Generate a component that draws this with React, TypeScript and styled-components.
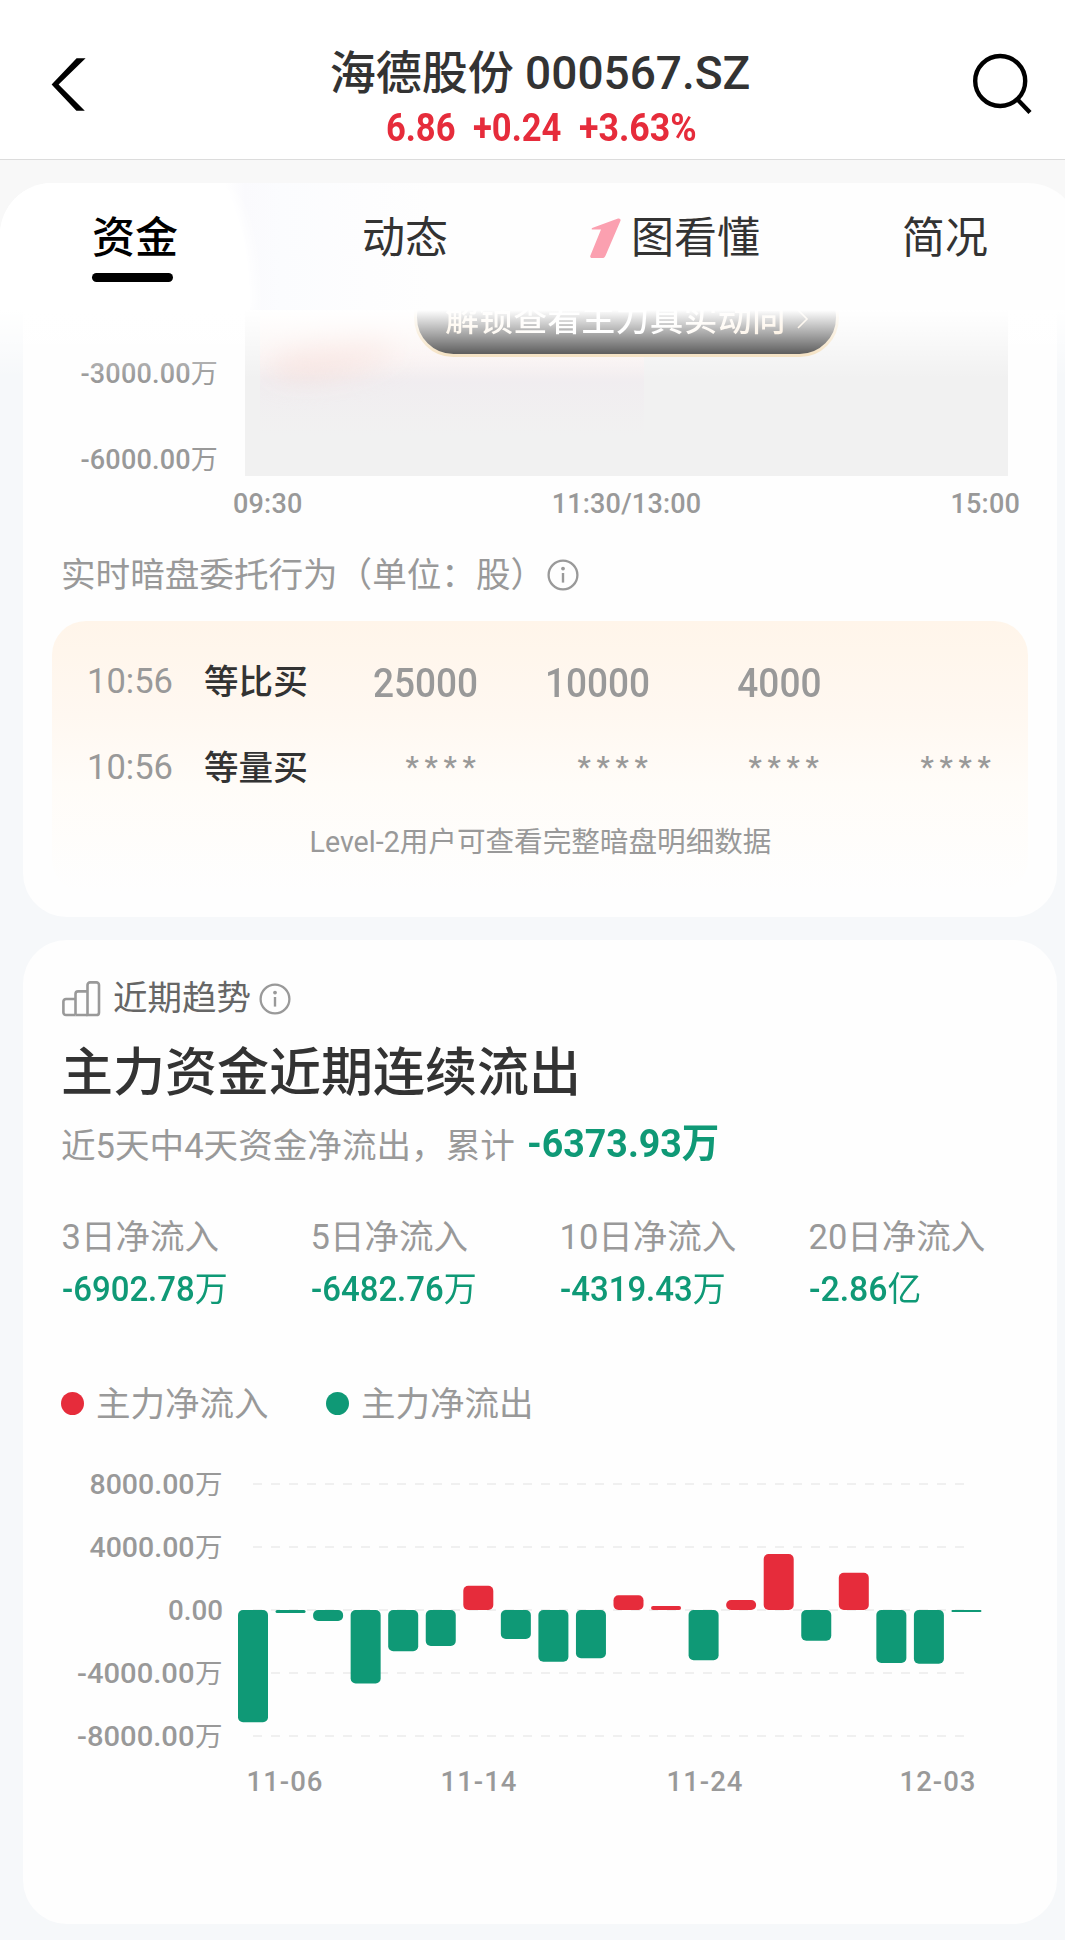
import React from 'react';
import styled, { createGlobalStyle, css } from 'styled-components';

const RED = '#e62c3b';
const GREEN = '#0f9976';
const GREY = '#999999';
const INK = '#333333';

const GlobalStyle = createGlobalStyle`
  html, body { margin: 0; padding: 0; background: #f6f8fa; }
  * { box-sizing: border-box; }
`;

const Page = styled.div`
  width: 1065px;
  height: 1940px;
  overflow: hidden;
  background: #f6f8fa;
  font-family: Roboto, 'Noto Sans CJK SC', sans-serif;
  color: ${INK};
  display: flex;
  flex-direction: column;
`;

/* Text whose glyphs are narrowed or widened horizontally */
const Figure = styled.span<{ $scale?: number; $origin?: string }>`
  display: inline-block;
  white-space: nowrap;
  transform: scaleX(${(p) => p.$scale ?? 1});
  transform-origin: ${(p) => p.$origin ?? 'left'} center;
`;

/* ---------- header ---------- */
const Header = styled.header`
  flex: none;
  height: 160px;
  background: #fff;
  border-bottom: 1px solid #dcdcdc;
  display: grid;
  grid-template-columns: 120px 1fr 120px;
`;

const IconSlot = styled.div<{ $pad: string }>`
  padding: ${(p) => p.$pad};
  svg { display: block; }
`;

const HeaderCenter = styled.div`
  display: flex;
  flex-direction: column;
  align-items: center;
  padding-top: 44px;
`;

const StockName = styled.h1`
  margin: 0 0 0 15px;
  font-size: 46px;
  line-height: 59px;
  font-weight: 500;
  white-space: pre;
`;

const Quote = styled.div`
  width: 310px;
  margin: 5px 0 0 16px;
  display: grid;
  grid-template-columns: 87px 106px 117px;
  color: ${RED};
  font-size: 38px;
  font-weight: 700;
  line-height: 40px;
`;

/* ---------- tabs ---------- */
const TabStrip = styled.nav`
  flex: none;
  height: 150px;
  padding-top: 23px;
  background: #f8f8f8;
`;

const TabList = styled.div`
  width: 1080px;
  height: 127px;
  border-radius: 52px 52px 0 0;
  background:
    linear-gradient(90deg, transparent 225px, #fafafd 245px, #fbfcfe 280px, #fdfdfe 370px, #fefefe 430px);
  background-color: #fff;
  display: grid;
  grid-template-columns: repeat(4, 270px);
  overflow: hidden;
`;

const Tab = styled.div<{ $active?: boolean }>`
  display: flex;
  flex-direction: column;
  align-items: center;
  padding-top: 27px;
  font-size: 43px;
  line-height: 56px;
  color: ${INK};
  ${(p) =>
    p.$active &&
    css`
      color: #000;
      font-weight: 500;
      background: #fff;
      border-radius: 0 40px 0 0 / 0 120px 0 0;
      margin-right: 20px;
      padding-left: 20px;
      box-shadow: 0 0 14px 5px #fff;
    `}
`;

const TabLabel = styled.div`
  display: flex;
  align-items: center;
  gap: 10px;
`;

const Underline = styled.div`
  width: 81px;
  height: 9px;
  margin: 7px 5px 0 0;
  border-radius: 4.5px;
  background: #000;
`;

/* ---------- scrolling content ---------- */
const Content = styled.main`
  position: relative;
  flex: 1;
  padding: 0 8px 0 23px;
  overflow: hidden;
`;

const TopFade = styled.div`
  position: absolute;
  left: 0;
  right: 0;
  top: 0;
  height: 68px;
  background: linear-gradient(180deg, #fff 0%, rgba(255, 255, 255, 0) 100%);
  pointer-events: none;
`;

const Card = styled.section<{ $first?: boolean }>`
  background: #fefefe;
  border-radius: ${(p) => (p.$first ? '0 0 44px 44px' : '44px')};
  height: ${(p) => (p.$first ? 607 : 984)}px;
  margin-bottom: 23px;
`;

const FlowChart = styled.div`
  display: grid;
  grid-template-columns: 222px 763px;
  height: 166px;
`;

const YAxis = styled.div`
  display: flex;
  flex-direction: column;
  align-items: flex-end;
  gap: 56px;
  padding: 49px 27px 0 0;
`;

const AxisText = styled.div`
  font-size: 27px;
  line-height: 30px;
  font-weight: 500;
  letter-spacing: 0.2px;
  color: ${GREY};
  white-space: nowrap;
`;

const Unit = styled.span`
  font-weight: 400;
`;

const Plot = styled.div`
  position: relative;
  overflow: hidden;
  background: #f1f1f1;
`;

const Smear = styled.div`
  position: absolute;
  left: 15px;
  top: 0;
  width: 384px;
  height: 130px;
  overflow: hidden;
  background: linear-gradient(
    180deg,
    rgba(255, 244, 240, 0.9) 0,
    rgba(252, 241, 240, 0.75) 45px,
    rgba(240, 234, 239, 0.55) 72px,
    rgba(241, 241, 241, 0) 125px
  );
  &::before {
    content: '';
    position: absolute;
    left: 8px;
    top: 24px;
    width: 130px;
    height: 40px;
    border-radius: 50%;
    background: rgba(247, 220, 213, 0.7);
    transform: rotate(-10deg);
    filter: blur(14px);
  }
`;

const UnlockPill = styled.div`
  position: absolute;
  left: 169px;
  top: -32px;
  width: 425px;
  height: 79px;
  border: 3px solid #f0d5a8;
  border-radius: 40px;
  background: #060606;
  display: flex;
  align-items: center;
  padding: 2px 0 0 28px;
  font-size: 34.1px;
  font-weight: 500;
  line-height: 44px;
  white-space: nowrap;
`;

const PillText = styled.span`
  background: linear-gradient(90deg, #ffe9c8 0%, #fff 35%, #fff 60%, #fbdcb4 100%);
  -webkit-background-clip: text;
  background-clip: text;
  color: transparent;
  margin-right: 10px;
`;

const TimeAxis = styled.div`
  display: flex;
  justify-content: space-between;
  padding: 13px 37px 0 210px;
  height: 78px;
`;

const SectionLabel = styled.div`
  display: flex;
  align-items: center;
  height: 41px;
  padding-left: 38px;
  font-size: 34.6px;
  line-height: 40px;
  color: ${GREY};
  white-space: nowrap;
  gap: 2px;
`;

const OrderBox = styled.div`
  margin: 26px 29px 0;
  height: 272px;
  border-radius: 34px;
  padding: 18px 35px 0 36px;
  background: linear-gradient(180deg, #fff5ea 0%, #fff8f1 35%, #fffcf8 60%, #fefefe 100%);
`;

const OrderRow = styled.div`
  height: 86px;
  display: grid;
  grid-template-columns: 116px 102px 172px 172px 171px 172px;
  align-items: center;
  line-height: 44px;
  font-size: 34.5px;
`;

const OrderTime = styled.span`
  color: ${GREY};
  margin: -2px 0 0 -1px;
`;

const OrderKind = styled.span`
  font-size: 34.6px;
  font-weight: 500;
  white-space: nowrap;
`;

const OrderQty = styled.span<{ $masked?: boolean }>`
  text-align: right;
  color: ${GREY};
  font-weight: 500;
  font-size: ${(p) => (p.$masked ? 30 : 39.8)}px;
  letter-spacing: ${(p) => (p.$masked ? 5.7 : 0)}px;
  padding-top: ${(p) => (p.$masked ? 0 : 3)}px;
  margin: ${(p) => (p.$masked ? '-3px -3.5px 0 0' : '0 -0.5px 0 0')};
`;

const OrderNote = styled.div`
  margin-top: 11px;
  text-align: center;
  font-size: 28.6px;
  line-height: 40px;
  color: ${GREY};
`;

/* ---------- trend card ---------- */
const TrendHead = styled.div`
  display: flex;
  align-items: center;
  padding: 38px 0 0 39px;
  font-size: 34.5px;
  line-height: 41px;
  color: #666;
  svg { flex: none; }
`;

const TrendName = styled.span`
  margin: 0 8px 0 12px;
`;

const TrendTitle = styled.h2`
  margin: 25px 0 0 38px;
  font-size: 52px;
  line-height: 60px;
  font-weight: 500;
`;

const TrendSummary = styled.div`
  display: flex;
  align-items: baseline;
  margin: 19px 0 0 38px;
  height: 44px;
  font-size: 34.6px;
  line-height: 44px;
  color: ${GREY};
  white-space: nowrap;
`;

const SummaryValue = styled.span`
  margin: 0 0 0 12px;
  position: relative;
  top: -1px;
  color: ${GREEN};
  font-size: 39.5px;
  font-weight: 700;
`;

const Stats = styled.div`
  display: grid;
  grid-template-columns: repeat(4, 249px);
  margin: 50px 0 0 38.5px;
`;

const Stat = styled.div`
  display: flex;
  flex-direction: column;
  gap: 12px;
  font-size: 34.5px;
  line-height: 40px;
  color: ${GREY};
`;

const StatValue = styled.div`
  color: ${GREEN};
  font-weight: 500;
  white-space: nowrap;
`;

const Legend = styled.div`
  display: flex;
  gap: 57.5px;
  margin: 75px 0 0 38px;
  font-size: 34.5px;
  line-height: 40px;
  color: ${GREY};
`;

const LegendItem = styled.div<{ $color: string }>`
  display: flex;
  align-items: center;
  gap: 12px;
  &::before {
    content: '';
    width: 23px;
    height: 23px;
    margin-top: -1px;
    border-radius: 50%;
    background: ${(p) => p.$color};
  }
`;

const ChartSvg = styled.svg`
  display: block;
  margin-top: 36px;
  text {
    font-family: Roboto, 'Noto Sans CJK SC', sans-serif;
    font-size: 27.5px;
    font-weight: 500;
    fill: ${GREY};
  }
  .unit { font-weight: 400; }
`;

const InfoIcon = () => (
  <svg width="32" height="32" viewBox="0 0 32 32" fill="none">
    <circle cx="16" cy="16" r="14.4" stroke={GREY} strokeWidth="2.3" />
    <circle cx="16" cy="9.6" r="1.9" fill={GREY} />
    <path d="M16 14v9.6" stroke={GREY} strokeWidth="2.4" />
  </svg>
);

const BarsIcon = () => (
  <svg width="39" height="36" viewBox="0 0 39 36" fill="none" stroke={GREY} strokeWidth="2.6">
    <path d="M13.5 34H4a2.6 2.6 0 0 1-2.6-2.6V20.6A2.6 2.6 0 0 1 4 18h9.5" />
    <path d="M13.5 34V13a2.6 2.6 0 0 1 2.6-2.6h9.4M13.5 34h12" />
    <path d="M25.5 34V4a2.6 2.6 0 0 1 2.6-2.6h6.3A2.6 2.6 0 0 1 37 4v27.4a2.6 2.6 0 0 1-2.6 2.6z" />
  </svg>
);

/* Bar extents in chart pixels, positive is inflow */
const bars = [
  -112.3, -3, -11, -73.5, -41.3, -36, 24.3, -29, -51.7, -48.3, 14.7, 4, -50.3, 10, 56, -30.7, 37.3, -53, -53.7, -2,
];
const levels = [
  { y: 24, label: '8000.00', unit: '万', width: 105 },
  { y: 87, label: '4000.00', unit: '万', width: 105 },
  { y: 150, label: '0.00', unit: '', width: 55 },
  { y: 213, label: '-4000.00', unit: '万', width: 117.5 },
  { y: 276, label: '-8000.00', unit: '万', width: 117.5 },
];
const days = [
  { x: 261.5, label: '11-06' },
  { x: 455.5, label: '11-14' },
  { x: 681.5, label: '11-24' },
  { x: 914.5, label: '12-03' },
];

const TrendChart = () => (
  <ChartSvg width="1034" height="350" viewBox="0 0 1034 350">
    {levels.map((l) => (
      <g key={l.label}>
        <line x1="230" x2="942" y1={l.y} y2={l.y} stroke="#f0f0f0" strokeWidth="2" strokeDasharray="9 9" />
        <text
          x={l.unit ? 171.5 : 200}
          y={l.y + 9.7}
          textAnchor="end"
          textLength={l.width}
          lengthAdjust="spacingAndGlyphs"
        >
          {l.label}
        </text>
        {l.unit && (
          <text className="unit" x="199.5" y={l.y + 9.7} textAnchor="end">
            {l.unit}
          </text>
        )}
      </g>
    ))}
    {bars.map((h, i) => {
      const size = Math.abs(h);
      return (
        <rect
          key={i}
          x={215 + i * 37.55}
          y={h > 0 ? 150 - size : 150}
          width="30"
          height={size}
          rx={Math.min(5, size / 2)}
          fill={h > 0 ? RED : GREEN}
        />
      );
    })}
    {days.map((d) => (
      <text key={d.label} x={d.x} y="331" textAnchor="middle" textLength="76">
        {d.label}
      </text>
    ))}
  </ChartSvg>
);

const orders = [
  { time: '10:56', kind: '等比买', qty: ['25000', '10000', '4000', ''] },
  { time: '10:56', kind: '等量买', qty: ['****', '****', '****', '****'] },
];

const stats = [
  { label: '3日净流入', value: '-6902.78', unit: '万', scale: 0.955 },
  { label: '5日净流入', value: '-6482.76', unit: '万', scale: 0.955 },
  { label: '10日净流入', value: '-4319.43', unit: '万', scale: 0.955 },
  { label: '20日净流入', value: '-2.86', unit: '亿', scale: 0.98 },
];

export default function App() {
  return (
    <Page>
      <GlobalStyle />
      <Header>
        <IconSlot $pad="58px 0 0 51px">
          <svg width="35" height="53" viewBox="0 0 35 53">
            <path d="M25.6 0.3H34.6L7.6 26.4 33.8 52.7H25.4L0.6 26.4z" fill="#000" />
          </svg>
        </IconSlot>
        <HeaderCenter>
          <StockName>海德股份 000567.SZ</StockName>
          <Quote>
            <Figure $scale={0.91}>6.86</Figure>
            <Figure $scale={0.91}>+0.24</Figure>
            <Figure $scale={0.94}>+3.63%</Figure>
          </Quote>
        </HeaderCenter>
        <IconSlot $pad="53px 0 0 26.5px">
          <svg width="60" height="62" viewBox="0 0 60 62" fill="none" stroke="#000" strokeWidth="4.4">
            <circle cx="28.2" cy="28" r="25" />
            <path d="M45.5 46.5L58 59.5" />
          </svg>
        </IconSlot>
      </Header>

      <TabStrip>
        <TabList>
          <Tab $active>
            <TabLabel>资金</TabLabel>
            <Underline />
          </Tab>
          <Tab>动态</Tab>
          <Tab>
            <TabLabel>
              <svg width="31" height="40" viewBox="0 0 31 40">
                <path
                  d="M28 0.6C29.8 0 31 1.4 30.4 3L15.6 37.4C15 39 13.8 40 12 40H2C0.6 40 -0.2 39 0.4 37.6L11 11.6H3C1.2 11.6 1.2 10.4 2.8 9.8z"
                  fill="#fba0b0"
                />
              </svg>
              图看懂
            </TabLabel>
          </Tab>
          <Tab>简况</Tab>
        </TabList>
      </TabStrip>

      <Content>
        <Card $first>
          <FlowChart>
            <YAxis>
              <AxisText>
                -3000.00<Unit>万</Unit>
              </AxisText>
              <AxisText>
                -6000.00<Unit>万</Unit>
              </AxisText>
            </YAxis>
            <Plot>
              <Smear />
              <UnlockPill>
                <PillText>解锁查看主力真实动向</PillText>
                <svg width="14" height="20" viewBox="0 0 14 20" fill="none">
                  <path d="M2 1l9 9-9 9" stroke="#fbdcb4" strokeWidth="1.6" />
                </svg>
              </UnlockPill>
            </Plot>
          </FlowChart>
          <TimeAxis>
            <AxisText>09:30</AxisText>
            <AxisText>11:30/13:00</AxisText>
            <AxisText>15:00</AxisText>
          </TimeAxis>
          <SectionLabel>
            实时暗盘委托行为（单位：股）
            <InfoIcon />
          </SectionLabel>
          <OrderBox>
            {orders.map((o) => (
              <OrderRow key={o.kind}>
                <OrderTime>{o.time}</OrderTime>
                <OrderKind>{o.kind}</OrderKind>
                {o.qty.map((q, i) => (
                  <OrderQty key={i} $masked={q === '****'}>
                    <Figure $scale={q === '****' ? 1 : 0.93} $origin="right">
                      {q}
                    </Figure>
                  </OrderQty>
                ))}
              </OrderRow>
            ))}
            <OrderNote>Level-2用户可查看完整暗盘明细数据</OrderNote>
          </OrderBox>
        </Card>

        <Card>
          <TrendHead>
            <BarsIcon />
            <TrendName>近期趋势</TrendName>
            <InfoIcon />
          </TrendHead>
          <TrendTitle>主力资金近期连续流出</TrendTitle>
          <TrendSummary>
            近5天中4天资金净流出，累计
            <SummaryValue>
              <Figure $scale={0.95}>-6373.93万</Figure>
            </SummaryValue>
          </TrendSummary>
          <Stats>
            {stats.map((s) => (
              <Stat key={s.label}>
                <span>{s.label}</span>
                <StatValue>
                  <Figure $scale={s.scale}>
                    {s.value}
                    <Unit>{s.unit}</Unit>
                  </Figure>
                </StatValue>
              </Stat>
            ))}
          </Stats>
          <Legend>
            <LegendItem $color={RED}>主力净流入</LegendItem>
            <LegendItem $color={GREEN}>主力净流出</LegendItem>
          </Legend>
          <TrendChart />
        </Card>
        <TopFade />
      </Content>
    </Page>
  );
}
